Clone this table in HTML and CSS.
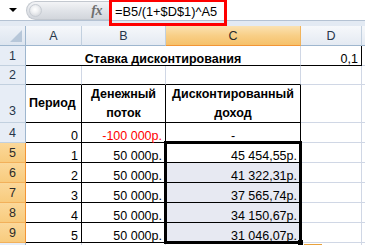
FILE: index.html
```html
<!DOCTYPE html>
<html>
<head>
<meta charset="utf-8">
<link rel="stylesheet" href="styles.css">
</head>
<body>
<div class="app">
  <div class="fbar">
    <div class="namebox"><span class="dd"></span></div>
    <div class="pill"><span class="knob"></span><span class="fx">fx</span></div>
    <div class="formula">=B5/(1+$D$1)^A5</div>
    <div class="redbox"></div>
  </div>
  <div class="band"></div>
  <div class="sheet">
    <div class="corner"><span class="tri"></span></div>
    <div class="ch">A</div>
    <div class="ch">B</div>
    <div class="ch selh">C</div>
    <div class="ch">D</div>
    <div class="ch"></div>

    <div class="rh">1</div>
    <div class="cell span3 bold ctr bb">Ставка дисконтирования</div>
    <div class="cell num bb br">0,1</div>
    <div class="cell"></div>

    <div class="rh">2</div>
    <div class="cell bb"></div>
    <div class="cell bb"></div>
    <div class="cell bb"></div>
    <div class="cell"></div>
    <div class="cell"></div>

    <div class="rh rh3">3</div>
    <div class="cell bold mid tb">Период</div>
    <div class="cell bold mid ctr wrap tb">Денежный<br>поток</div>
    <div class="cell bold mid ctr wrap tb">Дисконтированный<br>доход</div>
    <div class="cell"></div>
    <div class="cell"></div>

    <div class="rh">4</div>
    <div class="cell num tb">0</div>
    <div class="cell num tb red">-100 000р.</div>
    <div class="cell ctr tb">-</div>
    <div class="cell"></div>
    <div class="cell"></div>

    <div class="rh selr">5</div>
    <div class="cell num tb">1</div>
    <div class="cell num tb">50 000р.</div>
    <div class="cell num tb">45 454,55р.</div>
    <div class="cell"></div>
    <div class="cell"></div>

    <div class="rh selr">6</div>
    <div class="cell num tb">2</div>
    <div class="cell num tb">50 000р.</div>
    <div class="cell num tb hl">41 322,31р.</div>
    <div class="cell"></div>
    <div class="cell"></div>

    <div class="rh selr">7</div>
    <div class="cell num tb">3</div>
    <div class="cell num tb">50 000р.</div>
    <div class="cell num tb hl">37 565,74р.</div>
    <div class="cell"></div>
    <div class="cell"></div>

    <div class="rh selr">8</div>
    <div class="cell num tb">4</div>
    <div class="cell num tb">50 000р.</div>
    <div class="cell num tb hl">34 150,67р.</div>
    <div class="cell"></div>
    <div class="cell"></div>

    <div class="rh selr">9</div>
    <div class="cell num tb">5</div>
    <div class="cell num tb">50 000р.</div>
    <div class="cell num tb hl">31 046,07р.</div>
    <div class="cell"></div>
    <div class="cell"></div>

    <div class="rh"></div>
    <div class="cell"></div>
    <div class="cell"></div>
    <div class="cell"></div>
    <div class="cell"></div>
    <div class="cell"></div>
  </div>
  <div class="selection"></div>
  <div class="handle"></div>
  <div class="autofill"></div>
</div>
</body>
</html>
```
FILE: styles.css
```css
html, body {
  margin: 0;
  padding: 0;
  background: #ffffff;
}
body {
  width: 365px;
  height: 245px;
  overflow: hidden;
  font-family: "Liberation Sans", Arial, sans-serif;
  font-size: 12.5px;
  color: #000;
}
.app {
  position: relative;
  width: 365px;
  height: 245px;
  overflow: hidden;
}
.fbar {
  height: 20px;
  border-bottom: 1px solid #b4c2d3;
  display: flex;
  align-items: stretch;
  background: #fff;
}
.namebox {
  width: 26px;
  display: flex;
  align-items: center;
  justify-content: center;
}
.dd {
  width: 0;
  height: 0;
  border-left: 4px solid transparent;
  border-right: 4px solid transparent;
  border-top: 4px solid #000;
  margin-left: 0;
}
.pill {
  width: 83px;
  margin: 1px 0 0 0;
  height: 19px;
  box-sizing: border-box;
  border-radius: 10px 0 0 10px;
  background: linear-gradient(#f3f4f6, #dfe2e7 55%, #d2d6dc);
  border: 1px solid #c3c8cf;
  border-right: none;
  display: flex;
  align-items: center;
  justify-content: space-between;
  padding: 0 7px 0 2px;
}
.knob {
  width: 11px;
  height: 11px;
  border-radius: 50%;
  background: radial-gradient(circle at 45% 40%, #ffffff 0, #f1f2f4 35%, #c8ccd2 100%);
  border: 1px solid #c7ccd3;
}
.fx {
  font-family: "Liberation Serif", serif;
  font-style: italic;
  font-weight: bold;
  font-size: 14px;
  color: #6e6e6e;
  letter-spacing: -0.5px;
}
.formula {
  flex: 1;
  padding-left: 6px;
  display: flex;
  align-items: center;
  font-size: 12.8px;
  padding-top: 3px;
}
.redbox {
  position: absolute;
  left: 109px;
  top: -1px;
  width: 118px;
  height: 27px;
  box-sizing: border-box;
  border: 3px solid #ff0000;
}
.band {
  height: 5px;
  background: #e3eaf3;
}
.sheet {
  display: grid;
  grid-template-columns: 26px 56px 84px 135px 61px 1fr;
  grid-template-rows: 20px 20px 19px 38px 20px 20px 20px 20px 20px 20px 20px;
}
.sheet > div {
  box-sizing: border-box;
}
.corner {
  background: linear-gradient(#eef2f8, #dde5ef);
  border-right: 1px solid #9eb6ce;
  border-bottom: 1px solid #9eb6ce;
  position: relative;
}
.tri {
  position: absolute;
  right: 3px;
  bottom: 3px;
  width: 0;
  height: 0;
  border-left: 12px solid transparent;
  border-bottom: 12px solid #b7c7d9;
}
.ch {
  background: linear-gradient(#f6f8fb, #e4eaf2);
  border-right: 1px solid #c2d0df;
  border-bottom: 1px solid #9eb6ce;
  display: flex;
  align-items: center;
  justify-content: center;
  color: #27364a;
  font-size: 12.5px;
}
.ch.selh {
  background: linear-gradient(#fbe2b2, #f8cf87 50%, #f6c16a);
  border-bottom: 1px solid #f29536;
  border-right: 1px solid #f1b45c;
  color: #2a2a2a;
}
.rh {
  background: #e7edf6;
  border-right: 1px solid #9eb6ce;
  border-bottom: 1px solid #c2d0df;
  display: flex;
  justify-content: center;
  align-items: flex-end;
  padding-bottom: 3px;
  line-height: 12px;
  color: #27364a;
}
.rh.rh3 {
  padding-bottom: 5px;
}
.rh.selr {
  background: linear-gradient(#fbd89a, #f8cb7d);
  border-right: 1px solid #f29536;
  border-bottom: 1px solid #f2b05a;
  color: #2a2a2a;
}
.cell {
  border-right: 1px solid #d0d7e5;
  border-bottom: 1px solid #d0d7e5;
  display: flex;
  align-items: flex-end;
  padding: 0 3px 0 3px;
  line-height: 12px;
  white-space: nowrap;
}
.span3 { grid-column: span 3; }
.bold { font-weight: bold; }
.num { justify-content: flex-end; }
.ctr { justify-content: center; text-align: center; }
.mid { align-items: center; line-height: 19px; }
.wrap { white-space: normal; }
.bb { border-bottom-color: #000; }
.br { border-right-color: #000; }
.tb { border-right-color: #000; border-bottom-color: #000; }
.red { color: #ff0000; }
.hl { background: #e7e9f2; }
.selection {
  position: absolute;
  left: 164px;
  top: 141px;
  width: 138px;
  height: 103px;
  box-sizing: border-box;
  border: 3px solid #000;
}
.handle {
  position: absolute;
  left: 298px;
  top: 240px;
  width: 5px;
  height: 5px;
  background: #000;
}
.autofill {
  position: absolute;
  left: 304px;
  top: 244px;
  width: 18px;
  height: 4px;
  background: #f8d38e;
  border-top: 1px solid #e9a13b;
}
```
